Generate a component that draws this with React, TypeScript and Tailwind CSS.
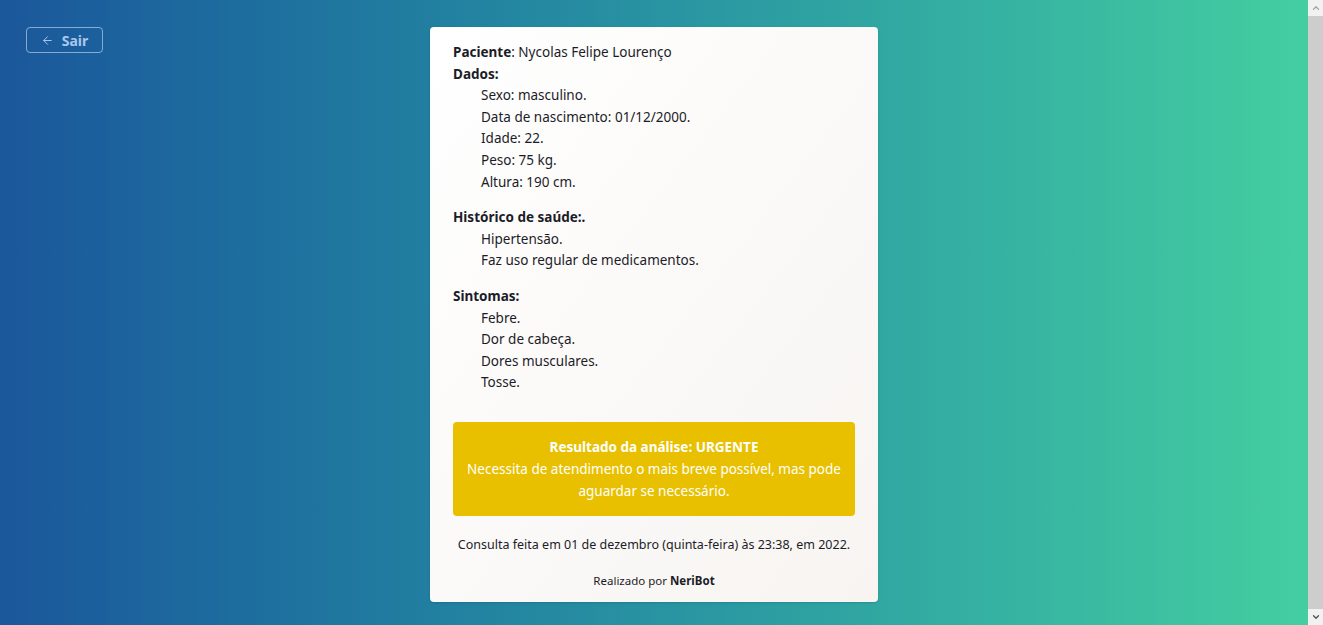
import { ArrowLeft, ChevronDown, ChevronUp } from "lucide-react";

const dados = [
  "Sexo: masculino.",
  "Data de nascimento: 01/12/2000.",
  "Idade: 22.",
  "Peso: 75 kg.",
  "Altura: 190 cm.",
];

const historico = ["Hipertensão.", "Faz uso regular de medicamentos."];

const sintomas = ["Febre.", "Dor de cabeça.", "Dores musculares.", "Tosse."];

function Lista({ itens }: { itens: string[] }) {
  return (
    <ul className="pl-7">
      {itens.map((item) => (
        <li key={item}>{item}</li>
      ))}
    </ul>
  );
}

export default function App() {
  return (
    <div
      className="flex h-screen overflow-hidden text-[#1c1c28]"
      style={{ fontFamily: '"Noto Sans", "Open Sans", sans-serif' }}
    >
      <div className="relative flex flex-1 justify-center bg-gradient-to-r from-[#1b579b] to-[#44cea0] pt-[27px]">
        {/* Back button */}
        <button className="absolute left-[26px] top-[27px] flex h-[26px] w-[77px] items-center justify-center gap-2 rounded border border-[#9cc0e4]/80 text-[14px] font-bold text-[#a9c9ec]">
          <ArrowLeft size={13} strokeWidth={1.8} />
          Sair
        </button>

        <main className="h-fit w-[448px] rounded bg-gradient-to-br from-white to-[#f7f4f1] px-[23px] pt-[15px] pb-[11px] text-[13.5px] leading-[21.6px] shadow-sm">
          <p>
            <span className="font-bold">Paciente</span>: Nycolas Felipe Lourenço
          </p>
          <p className="font-bold">Dados:</p>
          <Lista itens={dados} />

          <p className="mt-[14px] font-bold">Histórico de saúde:.</p>
          <Lista itens={historico} />

          <p className="mt-[14px] font-bold">Sintomas:</p>
          <Lista itens={sintomas} />

          <div className="mt-[28px] rounded bg-[#e8c000] px-2 py-[14px] text-center leading-[22px] text-white">
            <p className="font-bold">Resultado da análise: URGENTE</p>
            <p>
              Necessita de atendimento o mais breve possível, mas pode aguardar
              se necessário.
            </p>
          </div>

          <p className="mt-[18px] text-center text-[12.5px]">
            Consulta feita em 01 de dezembro (quinta-feira) às 23:38, em 2022.
          </p>
          <p className="mt-[14px] text-center text-[11.5px]">
            Realizado por <span className="font-bold">NeriBot</span>
          </p>
        </main>
      </div>

      {/* Scrollbar */}
      <aside className="flex w-[15px] flex-col bg-[#cdcdcd]">
        <div className="flex h-[16px] items-center justify-center bg-[#f1f1f1] text-[#a3a3a3]">
          <ChevronUp size={10} strokeWidth={3} />
        </div>
        <div className="flex-1" />
        <div className="flex h-[16px] items-center justify-center bg-[#f1f1f1] text-[#505050]">
          <ChevronDown size={10} strokeWidth={3} />
        </div>
      </aside>
    </div>
  );
}
